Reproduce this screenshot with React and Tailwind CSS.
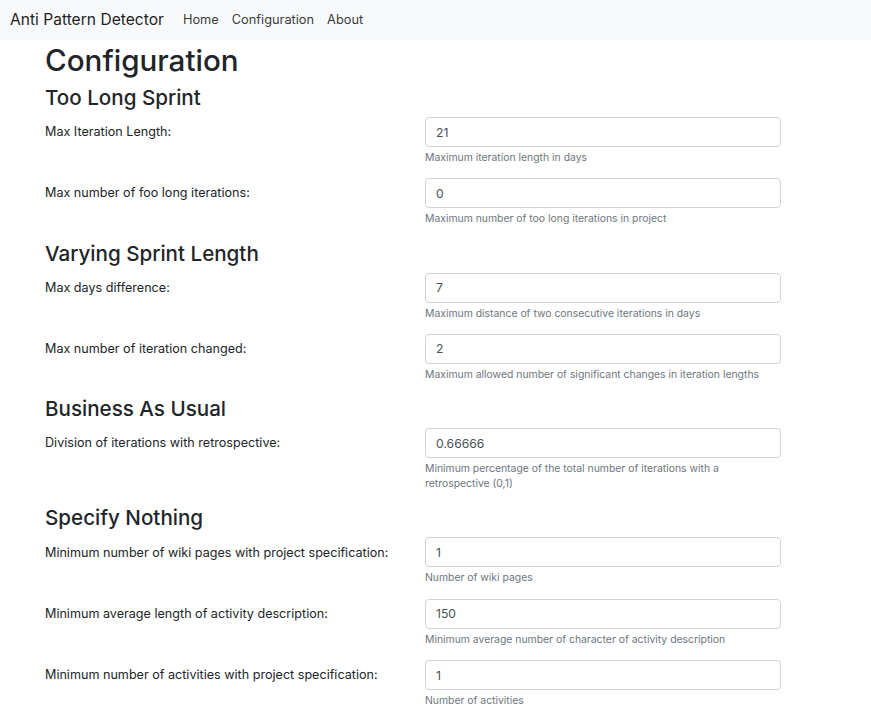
const sections = [
  {
    title: 'Too Long Sprint',
    fields: [
      { label: 'Max Iteration Length:', value: '21', help: 'Maximum iteration length in days' },
      { label: 'Max number of foo long iterations:', value: '0', help: 'Maximum number of too long iterations in project' },
    ],
  },
  {
    title: 'Varying Sprint Length',
    fields: [
      { label: 'Max days difference:', value: '7', help: 'Maximum distance of two consecutive iterations in days' },
      { label: 'Max number of iteration changed:', value: '2', help: 'Maximum allowed number of significant changes in iteration lengths' },
    ],
  },
  {
    title: 'Business As Usual',
    fields: [
      {
        label: 'Division of iterations with retrospective:',
        value: '0.66666',
        help: 'Minimum percentage of the total number of iterations with a retrospective (0,1)',
      },
    ],
  },
  {
    title: 'Specify Nothing',
    fields: [
      { label: 'Minimum number of wiki pages with project specification:', value: '1', help: 'Number of wiki pages' },
      { label: 'Minimum average length of activity description:', value: '150', help: 'Minimum average number of character of activity description' },
      { label: 'Minimum number of activities with project specification:', value: '1', help: 'Number of activities' },
    ],
  },
];

function Field({ field }) {
  return (
    <div className="mb-[13.3px] grid grid-cols-[380px_356px]">
      <label className="flex h-[30px] items-center pt-px text-[12.6px] text-[#212529]">{field.label}</label>
      <div>
        <input
          type="text"
          defaultValue={field.value}
          className="block h-[30px] w-full rounded-[4px] border border-[#ced4da] bg-white px-[10px] text-[12.2px] text-[#495057] outline-none"
        />
        <p className="mt-[3px] text-[10.4px] leading-[15px] text-[#6c757d]">{field.help}</p>
      </div>
    </div>
  );
}

export default function App() {
  return (
    <div className="min-h-screen bg-white font-['Inter','Liberation_Sans',sans-serif] text-[#212529]">
      <nav className="flex h-10 items-center bg-[#f8f9fa] px-[10px]">
        <span className="mr-[19px] text-[15.6px] text-black/90">Anti Pattern Detector</span>
        <div className="flex items-center gap-[13px] text-[12.8px] text-black/80">
          <a>Home</a>
          <a>Configuration</a>
          <a>About</a>
        </div>
      </nav>

      <main className="pl-[45px]">
        <h1 className="mt-px mb-[5px] text-[29.6px] font-medium leading-[38px]">Configuration</h1>
        {sections.map((section) => (
          <section key={section.title}>
            <h3 className="mb-[6px] text-[20.6px] font-medium leading-[27px]">{section.title}</h3>
            {section.fields.map((field) => (
              <Field key={field.label} field={field} />
            ))}
          </section>
        ))}
      </main>
    </div>
  );
}
